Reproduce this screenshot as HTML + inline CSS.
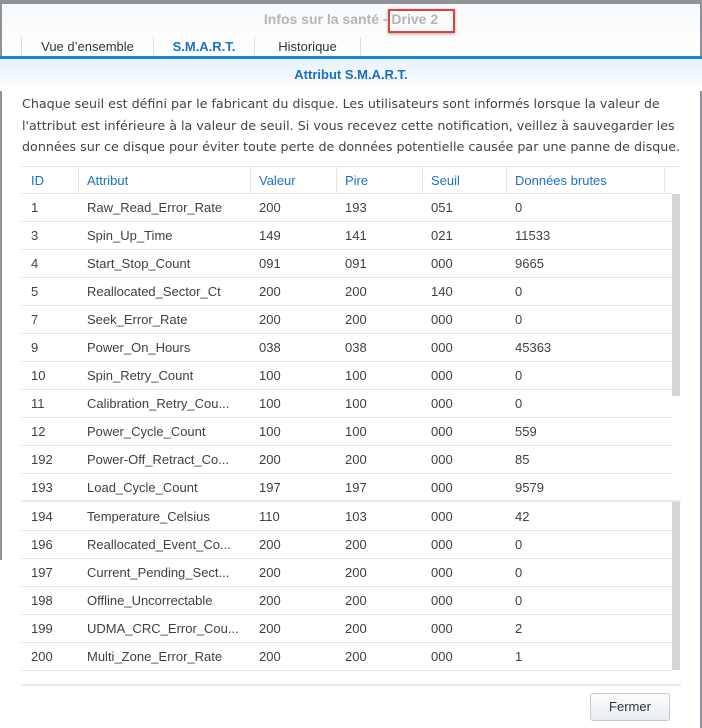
<!DOCTYPE html>
<html><head><meta charset="utf-8"><style>
*{margin:0;padding:0;box-sizing:border-box}
body{width:702px;height:728px;background:#fff;font-family:"Liberation Sans",sans-serif;position:relative;overflow:hidden;color:#404040}
.abs{position:absolute}
.top{left:0;top:0;width:702px;height:4px;background:#8e9399}
.head{left:0;top:4px;width:702px;height:52px;background:linear-gradient(#f8f9fa,#fff)}
.title{left:0;width:702px;top:11px;text-align:center;font-weight:bold;font-size:14px;color:#b3b6ba}
.redbox{left:388px;top:9px;width:67px;height:24px;border:2px solid #d9423d;box-shadow:0 1px 3px rgba(0,0,0,.35)}
.tab{top:37px;height:20px;font-size:13px;color:#333;text-align:center;line-height:20px;border-right:1px solid #ddd}
.blue{left:0;top:56px;width:702px;height:3px;background:#1a84d8}
.sub{left:0;top:59px;width:702px;height:32px;background:linear-gradient(#e6f1fb,#fff)}
.subt{left:0;width:702px;top:67px;text-align:center;font-weight:bold;font-size:13px;color:#1a6fc0}
.p{left:22px;font-family:"DejaVu Sans",sans-serif;font-size:12.7px;color:#444;white-space:nowrap}
.line{height:1px;background:#e4e6e8}
.c{position:absolute;font-size:13px;white-space:nowrap}
.h{color:#1a72c4}
.vd{position:absolute;width:1px;background:#e4e6e8;top:167px;height:27px}
.sb{left:672px;width:8px;background:#d4d5d7}
.btn{left:590px;top:693px;width:80px;height:28px;border:1px solid #c6ccd2;border-radius:3px;background:linear-gradient(#fbfcfd,#e9edf1);font-size:13px;text-align:center;line-height:26px;color:#333}
</style></head><body>
<div class="abs top"></div>
<div class="abs head"></div>
<div class="abs" style="left:0;top:4px;width:2px;height:556px;background:#8e9399"></div>
<div class="abs" style="left:700px;top:4px;width:2px;height:724px;background:#8e9399"></div>
<div class="abs title">Infos sur la santé - Drive 2</div>
<div class="abs redbox"></div>
<div class="abs" style="left:21px;top:37px;width:1px;height:20px;background:#ddd"></div>
<div class="abs tab" style="left:22px;width:132px">Vue d’ensemble</div>
<div class="abs tab" style="left:154px;width:101px;color:#1a72c4;font-weight:bold">S.M.A.R.T.</div>
<div class="abs tab" style="left:255px;width:106px">Historique</div>
<div class="abs blue"></div>
<div class="abs sub"></div>
<div class="abs subt">Attribut S.M.A.R.T.</div>
<div class="abs p" style="top:96px">Chaque seuil est défini par le fabricant du disque. Les utilisateurs sont informés lorsque la valeur de</div>
<div class="abs p" style="top:118px">l'attribut est inférieure à la valeur de seuil. Si vous recevez cette notification, veillez à sauvegarder les</div>
<div class="abs p" style="top:139px">données sur ce disque pour éviter toute perte de données potentielle causée par une panne de disque.</div>
<div class="abs line" style="left:21px;top:166px;width:660px"></div>
<div class="vd" style="left:78px"></div><div class="vd" style="left:250px"></div><div class="vd" style="left:336px"></div><div class="vd" style="left:422px"></div><div class="vd" style="left:506px"></div><div class="vd" style="left:664px"></div>
<div class="abs sb" style="top:194px;height:202px"></div>
<div class="abs sb" style="top:502px;height:168px"></div>
<div class="abs line" style="left:21px;top:500px;width:660px;height:2px;background:#e8eaec"></div>
<div class="abs line" style="left:21px;top:684px;width:660px;height:2px;background:#e8eaec"></div>
<div id="t"></div>
<div class="abs btn">Fermer</div>
<script>
var rows=[["1","Raw_Read_Error_Rate","200","193","051","0"],["3","Spin_Up_Time","149","141","021","11533"],["4","Start_Stop_Count","091","091","000","9665"],["5","Reallocated_Sector_Ct","200","200","140","0"],["7","Seek_Error_Rate","200","200","000","0"],["9","Power_On_Hours","038","038","000","45363"],["10","Spin_Retry_Count","100","100","000","0"],["11","Calibration_Retry_Cou...","100","100","000","0"],["12","Power_Cycle_Count","100","100","000","559"],["192","Power-Off_Retract_Co...","200","200","000","85"],["193","Load_Cycle_Count","197","197","000","9579"],["194","Temperature_Celsius","110","103","000","42"],["196","Reallocated_Event_Co...","200","200","000","0"],["197","Current_Pending_Sect...","200","200","000","0"],["198","Offline_Uncorrectable","200","200","000","0"],["199","UDMA_CRC_Error_Cou...","200","200","000","2"],["200","Multi_Zone_Error_Rate","200","200","000","1"]];
var xs=[31,87,259,345,431,515],h="",head=["ID","Attribut","Valeur","Pire","Seuil","Données brutes"];
head.forEach((t,i)=>h+='<div class="c h" style="left:'+xs[i]+'px;top:173px">'+t+'</div>');
h+='<div class="abs line" style="left:21px;top:193px;width:651px"></div>';
rows.forEach((r,k)=>{var y=k<11?200+k*28:509+(k-11)*28;
r.forEach((t,i)=>h+='<div class="c" style="left:'+xs[i]+'px;top:'+y+'px">'+t+'</div>');
if(k!=10)h+='<div class="abs line" style="left:21px;top:'+(y+21)+'px;width:651px"></div>';});
document.getElementById('t').innerHTML=h;
</script>
</body></html>
